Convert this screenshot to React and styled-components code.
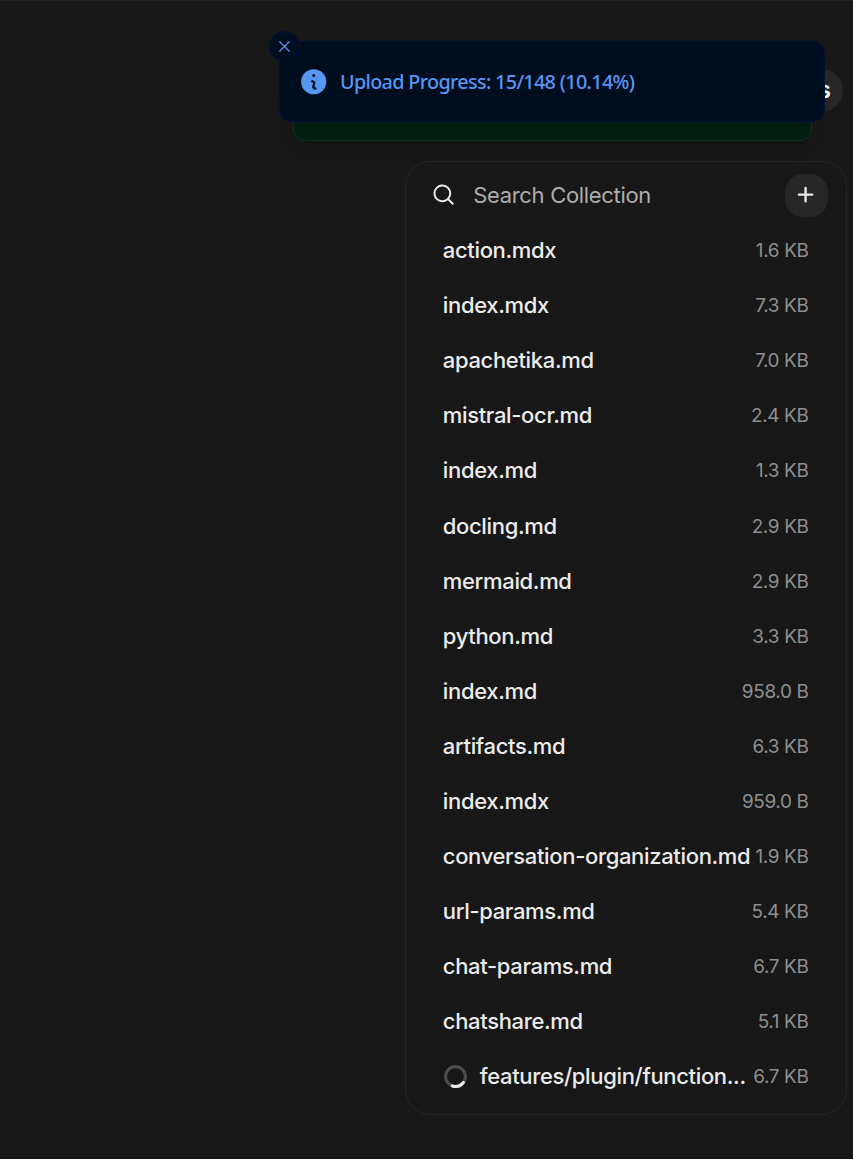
import React from "react";
import styled, { createGlobalStyle } from "styled-components";

const GlobalStyle = createGlobalStyle`
  * { box-sizing: border-box; }
  body { margin: 0; background: #171717; overflow: hidden; }
`;

const Page = styled.main`
  position: relative;
  display: flex;
  flex-direction: column;
  align-items: flex-end;
  width: 853px;
  height: 1159px;
  border-top: 1px solid #212121;
  border-bottom: 1px solid #110b10;
  background: #171717;
  color: #ececec;
  font-family: Inter, sans-serif;
`;

const Header = styled.header`
  display: flex;
  justify-content: flex-end;
  padding: 68px 10px 0 0;
  height: 160px;
`;

const AccessButton = styled.button`
  display: flex;
  align-items: center;
  justify-content: flex-end;
  width: 120px;
  height: 43px;
  padding: 0 12px;
  border: 0;
  border-radius: 22px;
  background: #262626;
  color: #fff;
  font: 600 23px/31px Inter, sans-serif;
`;

const Panel = styled.section`
  display: flex;
  flex-direction: column;
  width: 442px;
  height: 954px;
  margin-right: 6px;
  padding: 12px 18px 0 24.5px;
  border: 1px solid #242424;
  border-radius: 25px;
`;

const SearchBar = styled.div`
  display: flex;
  align-items: center;
  flex: none;
  height: 43px;
`;

const SearchIcon = styled.svg`
  width: 25.2px;
  height: 25.2px;
  flex: none;
  margin-bottom: 1px;
`;

const SearchLabel = styled.span`
  flex: 1;
  margin-left: 17.5px;
  color: #adadad;
  font-size: 22px;
  line-height: 31px;
  letter-spacing: -0.32px;
`;

const AddButton = styled.button`
  display: grid;
  place-items: center;
  width: 43px;
  height: 43px;
  padding: 0 1.5px 1px 0;
  border: 0;
  border-radius: 18px;
  background: #262626;
  color: #ececec;
`;

const FileList = styled.ul`
  display: flex;
  flex-direction: column;
  margin: 6px 19.5px 0 12.3px;
  padding: 0;
  list-style: none;
`;

const FileRow = styled.li`
  display: flex;
  align-items: center;
  justify-content: space-between;
  height: 55.1px;
  white-space: nowrap;
`;

const FileInfo = styled.div`
  display: flex;
  align-items: center;
  min-width: 0;
`;

const FileName = styled.span`
  color: #ececec;
  font-size: 22px;
  font-weight: 550;
  line-height: 31px;
  letter-spacing: -0.34px;
`;

const FileSize = styled.span`
  color: #8f8f8f;
  font-size: 18.9px;
  line-height: 25px;
  letter-spacing: -0.34px;
`;

const Spinner = styled.svg`
  flex: none;
  width: 25px;
  height: 25px;
  margin-right: 12px;
  transform: rotate(208deg);
`;

const Notifications = styled.aside`
  position: absolute;
  top: 40px;
  left: 279px;
  width: 546px;
  height: 100px;
`;

const StackedToast = styled.div`
  position: absolute;
  left: 13.5px;
  right: 13.5px;
  bottom: 0;
  height: 60px;
  border: 1px solid #033716;
  border-radius: 12px;
  background: #001e0f;
  box-shadow: 0 6px 19px rgba(0, 0, 0, 0.1);
`;

const Toast = styled.div`
  position: relative;
  display: flex;
  align-items: center;
  height: 81px;
  padding-left: 18px;
  border: 1px solid #00103c;
  border-radius: 12.6px;
  background: #000d1f;
  color: #5896f3;
`;

const InfoIcon = styled.svg`
  width: 31.5px;
  height: 31.5px;
`;

const ToastText = styled.span`
  margin-left: 10.5px;
  font: 500 19.8px/30px "Noto Sans", sans-serif;
  letter-spacing: -0.67px;
  white-space: nowrap;
`;

const CloseButton = styled.button`
  position: absolute;
  top: -11px;
  left: -11px;
  display: grid;
  place-items: center;
  width: 31px;
  height: 31px;
  padding: 0;
  border: 1px solid #00103c;
  border-radius: 50%;
  background: #000d1f;
  color: #5896f3;
`;

const files = [
  ["action.mdx", "1.6 KB"],
  ["index.mdx", "7.3 KB"],
  ["apachetika.md", "7.0 KB"],
  ["mistral-ocr.md", "2.4 KB"],
  ["index.md", "1.3 KB"],
  ["docling.md", "2.9 KB"],
  ["mermaid.md", "2.9 KB"],
  ["python.md", "3.3 KB"],
  ["index.md", "958.0 B"],
  ["artifacts.md", "6.3 KB"],
  ["index.mdx", "959.0 B"],
  ["conversation-organization.md", "1.9 KB"],
  ["url-params.md", "5.4 KB"],
  ["chat-params.md", "6.7 KB"],
  ["chatshare.md", "5.1 KB"],
  ["features/plugin/function...", "6.7 KB", true],
];

export default function App() {
  return (
    <>
      <GlobalStyle />
      <Page>
        <Header>
          <AccessButton>s</AccessButton>
        </Header>
        <Panel>
          <SearchBar>
            <SearchIcon viewBox="0 0 20 20" fill="currentColor">
              <path fillRule="evenodd" clipRule="evenodd" d="M9 3.5a5.5 5.5 0 100 11 5.5 5.5 0 000-11zM2 9a7 7 0 1112.452 4.391l3.328 3.329a.75.75 0 11-1.06 1.06l-3.329-3.328A7 7 0 012 9z" />
            </SearchIcon>
            <SearchLabel>Search Collection</SearchLabel>
            <AddButton>
              <svg width="25.2" height="25.2" viewBox="0 0 16 16" fill="currentColor">
                <path d="M8.75 3.75a.75.75 0 0 0-1.5 0v3.5h-3.5a.75.75 0 0 0 0 1.5h3.5v3.5a.75.75 0 0 0 1.5 0v-3.5h3.5a.75.75 0 0 0 0-1.5h-3.5v-3.5Z" />
              </svg>
            </AddButton>
          </SearchBar>
          <FileList>
            {files.map(([name, size, loading], i) => (
              <FileRow key={i}>
                <FileInfo>
                  {loading && (
                    <Spinner viewBox="0 0 24 24" fill="currentColor">
                      <path opacity=".25" d="M12,1A11,11,0,1,0,23,12,11,11,0,0,0,12,1Zm0,19a8,8,0,1,1,8-8A8,8,0,0,1,12,20Z" />
                      <path d="M10.14,1.16a11,11,0,0,0-9,8.92A1.59,1.59,0,0,0,2.46,12,1.52,1.52,0,0,0,4.11,10.7a8,8,0,0,1,6.66-6.61A1.42,1.42,0,0,0,12,2.69h0A1.57,1.57,0,0,0,10.14,1.16Z" />
                    </Spinner>
                  )}
                  <FileName>{name}</FileName>
                </FileInfo>
                <FileSize>{size}</FileSize>
              </FileRow>
            ))}
          </FileList>
        </Panel>
        <Notifications>
          <StackedToast />
          <Toast>
            <CloseButton>
              <svg width="19" height="19" viewBox="0 0 24 24" fill="none" stroke="currentColor" strokeWidth="1.5" strokeLinecap="round">
                <path d="M18 6 6 18M6 6l12 12" />
              </svg>
            </CloseButton>
            <InfoIcon viewBox="0 0 20 20" fill="currentColor">
              <path fillRule="evenodd" clipRule="evenodd" d="M18 10a8 8 0 1 1-16 0 8 8 0 0 1 16 0Zm-7-4a1 1 0 1 1-2 0 1 1 0 0 1 2 0ZM9 9a.75.75 0 0 0 0 1.5h.253a.25.25 0 0 1 .244.304l-.459 2.066A1.75 1.75 0 0 0 10.747 15H11a.75.75 0 0 0 0-1.5h-.253a.25.25 0 0 1-.244-.304l.459-2.066A1.75 1.75 0 0 0 9.253 9H9Z" />
            </InfoIcon>
            <ToastText>Upload Progress: 15/148 (10.14%)</ToastText>
          </Toast>
        </Notifications>
      </Page>
    </>
  );
}
